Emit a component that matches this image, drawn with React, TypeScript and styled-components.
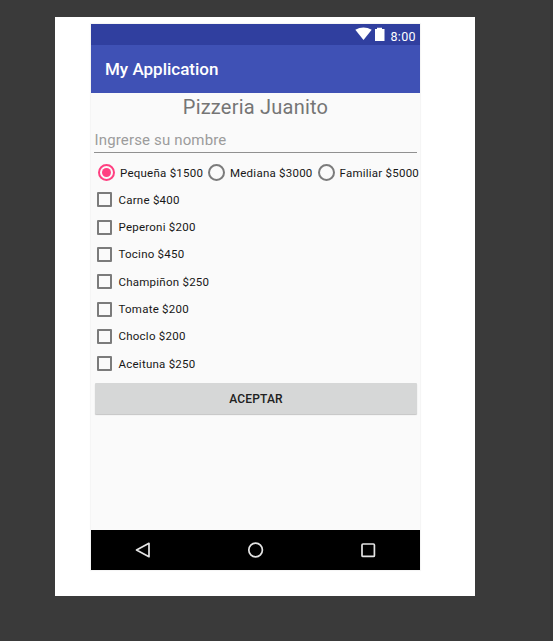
import React from "react";
import styled, { createGlobalStyle } from "styled-components";

const GlobalStyle = createGlobalStyle`
  *, *::before, *::after { box-sizing: border-box; }
  html, body { margin: 0; background: #3a3a3a; }
  body { font-family: Roboto, "Liberation Sans", sans-serif; overflow: hidden; }
`;

const Page = styled.main`
  width: 553px;
  height: 641px;
  padding: 17px 0 0 55px;
  background: #3a3a3a;
`;

const Sheet = styled.div`
  width: 420px;
  height: 579px;
  padding: 7px 0 0 36px;
  background: #fff;
`;

const Phone = styled.section`
  display: flex;
  flex-direction: column;
  width: 329px;
  height: 546px;
  background: #fafafa;
  box-shadow: 0 0 1px 1px #f5f5f5;
`;

const StatusBar = styled.div`
  display: flex;
  align-items: flex-start;
  justify-content: flex-end;
  height: 21px;
  padding: 3px 4px 0 0;
  background: #303f9f;
  color: #fff;
`;

const Clock = styled.span`
  margin: 3px 0 0 4px;
  font-size: 12.5px;
  font-weight: 400;
  line-height: 14px;
  letter-spacing: 0.35px;
`;

const AppBar = styled.header`
  display: flex;
  align-items: center;
  height: 48px;
  padding: 0 0 1px 14px;
  background: #3f51b5;
  color: #fff;
  font-size: 17px;
  font-weight: 500;
`;

const Content = styled.div`
  flex: 1;
  display: flex;
  flex-direction: column;
`;

const Title = styled.h1`
  height: 30px;
  margin: 0;
  color: #757575;
  font-size: 20px;
  font-weight: 400;
  line-height: 29px;
  letter-spacing: 0.22px;
  text-align: center;
`;

const NameField = styled.input`
  height: 30px;
  margin: 0 3px;
  padding: 5px 0 0 0.5px;
  border: 0;
  border-bottom: 1px solid #909090;
  outline: 0;
  background: transparent;
  font: 400 15px Roboto, sans-serif;
  letter-spacing: 0.15px;
  &::placeholder { color: #9c9c9c; opacity: 1; }
`;

const Sizes = styled.div`
  display: grid;
  grid-template-columns: 110px 109.5px 1fr;
  height: 27px;
  margin: 6px 0 0 7px;
`;

const Option = styled.label`
  display: flex;
  align-items: center;
  color: #171717;
  font-size: 11.5px;
  line-height: 14px;
  white-space: nowrap;
  letter-spacing: 0.24px;
`;

const RadioMark = styled.span<{ $on?: boolean }>`
  display: grid;
  place-items: center;
  flex: none;
  width: 17px;
  height: 17px;
  margin-right: 5px;
  border: 2px solid ${(p) => (p.$on ? "#ff4081" : "#7b7b7b")};
  border-radius: 50%;
  &::after {
    content: "";
    width: 9px;
    height: 9px;
    border-radius: 50%;
    background: ${(p) => (p.$on ? "#ff4081" : "transparent")};
  }
`;

const Toppings = styled.div`
  display: grid;
  grid-auto-rows: 27.35px;
  margin-left: 6px;
`;

const CheckMark = styled.span`
  flex: none;
  width: 15px;
  height: 15px;
  margin-right: 6.5px;
  border: 2px solid #7b7b7b;
  border-radius: 1px;
`;

const Accept = styled.button`
  height: 31px;
  margin: 6px 3px 0 4px;
  padding: 0;
  border: 0;
  border-radius: 1px;
  background: #d6d7d7;
  box-shadow: 0 1px 1px #c4c4c4;
  color: #202020;
  font: 500 12px Roboto, sans-serif;
  letter-spacing: 0.15px;
`;

const NavBar = styled.nav`
  display: flex;
  align-items: center;
  justify-content: space-between;
  height: 40px;
  padding: 0 43px;
  background: #000;
`;

const sizes = ["Pequeña $1500", "Mediana $3000", "Familiar $5000"];
const toppings = ["Carne $400", "Peperoni $200", "Tocino $450", "Champiñon $250", "Tomate $200", "Choclo $200", "Aceituna $250"];

export default function App() {
  return (
    <Page>
      <GlobalStyle />
      <Sheet>
        <Phone>
          <StatusBar>
            <svg width="17" height="14" viewBox="0 0 17 14" fill="#fff"><path d="M0.3 2.8Q8.5-1.6 16.7 2.8L8.5 13Z" /></svg>
            <svg width="14" height="15" viewBox="0 0 14 15" fill="#fff"><path d="M3 2h2V.8h5V2h2.5v12H3z" /></svg>
            <Clock>8:00</Clock>
          </StatusBar>
          <AppBar><span>My Application</span></AppBar>
          <Content>
            <Title><span>Pizzeria Juanito</span></Title>
            <NameField placeholder="Ingrerse su nombre" />
            <Sizes>
              {sizes.map((size, i) => (
                <Option key={size}><RadioMark $on={i === 0} /><span>{size}</span></Option>
              ))}
            </Sizes>
            <Toppings>
              {toppings.map((topping) => (
                <Option key={topping}><CheckMark /><span>{topping}</span></Option>
              ))}
            </Toppings>
            <Accept>ACEPTAR</Accept>
          </Content>
          <NavBar>
            <svg width="18" height="18" viewBox="0 0 18 18" fill="none" stroke="#e4e4e4" strokeWidth="1.7" strokeLinejoin="round"><path d="M15 2.3v13.4L2.5 9z" /></svg>
            <svg width="18" height="18" viewBox="0 0 18 18" fill="none" stroke="#e4e4e4" strokeWidth="1.7"><circle cx="8.6" cy="9" r="6.8" /></svg>
            <svg width="18" height="18" viewBox="0 0 18 18" fill="none" stroke="#e4e4e4" strokeWidth="1.7"><rect x="3" y="3" width="12.4" height="12.4" rx="1" /></svg>
          </NavBar>
        </Phone>
      </Sheet>
    </Page>
  );
}
